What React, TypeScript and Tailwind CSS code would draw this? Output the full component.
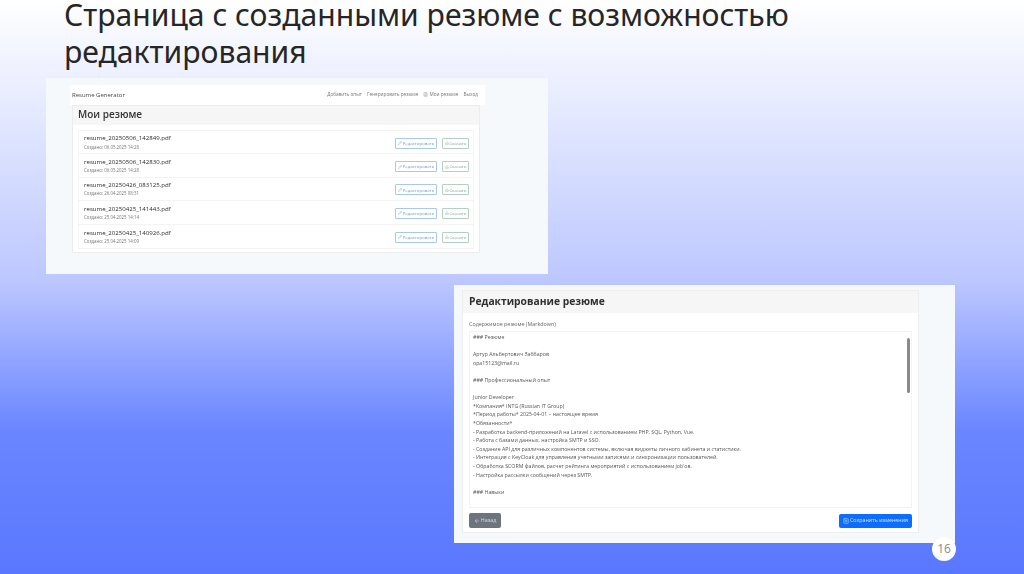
import { ArrowLeft, Download, FileText, Pencil, SquarePlus } from "lucide-react";

const items = [
  ["resume_20250506_142849.pdf", "Создано: 06.05.2025 14:28"],
  ["resume_20250506_142830.pdf", "Создано: 06.05.2025 14:28"],
  ["resume_20250426_083125.pdf", "Создано: 26.04.2025 08:31"],
  ["resume_20250425_141443.pdf", "Создано: 25.04.2025 14:14"],
  ["resume_20250425_140926.pdf", "Создано: 25.04.2025 14:09"],
];

const lines = [
  "### Резюме",
  "",
  "Артур Альбертович Заббаров",
  "opa15123@mail.ru",
  "",
  "### Профессиональный опыт",
  "",
  "Junior Developer",
  "*Компания* INTG (Russian IT Group)",
  "*Период работы* 2025-04-01 – настоящее время",
  "*Обязанности*",
  "- Разработка backend-приложений на Laravel с использованием PHP, SQL, Python, Vue.",
  "- Работа с базами данных, настройка SMTP и SSO.",
  "- Создание API для различных компонентов системы, включая виджеты личного кабинета и статистики.",
  "- Интеграция с KeyCloak для управления учетными записями и синхронизации пользователей.",
  "- Обработка SCORM файлов, расчет рейтинга мероприятий с использованием job'ов.",
  "- Настройка рассылки сообщений через SMTP.",
  "",
  "### Навыки",
];

function ResumeList() {
  return (
    <div className="ml-[46px] h-[196px] w-[502px] bg-[#f5f9fc] pl-6 pt-[7px] font-['Open_Sans',sans-serif]">
      <div className="blur-[0.3px]">
        <div className="flex h-5 w-[415px] items-center justify-between bg-white pl-[2px] pr-[7px] text-[#777]">
          <span className="text-[6px] text-[#444]">Resume Generator</span>
          <div className="flex items-center gap-[5px] text-[4.7px]">
            <span>Добавить опыт</span>
            <span>Генерировать резюме</span>
            <span className="flex items-center gap-[1px]"><FileText size={5} strokeWidth={1.5} />Мои резюме</span>
            <span>Выход</span>
          </div>
        </div>
        <div className="ml-[2px] h-[148px] w-[408px] border border-[#ececec] bg-white">
          <div className="flex h-[19px] items-center bg-[#f6f6f6] px-[5px] pb-[2px] text-[10px] font-semibold text-[#333]">Мои резюме</div>
          <div className="mx-[5px] mt-[5px] border border-[#f4f4f4]">
            {items.map(([name, date]) => (
              <div key={name} className="flex h-[23.4px] items-center justify-between border-b border-[#f3f3f3] pl-[5px] pr-[4px] last:border-b-0">
                <div className="leading-none">
                  <div className="text-[6.1px] font-medium text-[#2b2b2b]">{name}</div>
                  <div className="mt-[3px] text-[4.4px] text-[#777]">{date}</div>
                </div>
                <div className="mt-[2px] flex gap-[5px] text-[4.3px]">
                  <span className="flex h-[11px] w-[42px] items-center justify-center gap-[1px] rounded-[1px] border border-[#a9c8ee] text-[#6b9ad6]"><Pencil size={4} />Редактировать</span>
                  <span className="flex h-[11px] w-[27px] items-center justify-center gap-[1px] rounded-[1px] border border-[#b5d0c2] text-[#7fa58f]"><Download size={4} />Скачать</span>
                </div>
              </div>
            ))}
          </div>
        </div>
      </div>
    </div>
  );
}

function ResumeEdit() {
  return (
    <div className="ml-[454px] mt-[11px] h-[258px] w-[501px] bg-[#f5f9fc] pl-[8px] pt-[5px] font-['Open_Sans',sans-serif]">
      <div className="h-[243px] w-[457px] border border-[#eeeeee] bg-white blur-[0.3px]">
        <div className="flex h-[22px] items-center bg-[#f6f6f6] px-[6px] text-[10.3px] font-bold text-[#2f2f2f]">Редактирование резюме</div>
        <div className="px-[6px] pt-[5px]">
          <div className="text-[5.4px] leading-[12px] text-[#666]">Содержимое резюме (Markdown)</div>
          <div className="relative mt-[1px] h-[177px] border border-[#f3f3f3] px-[3px] pt-[1px] text-[5.25px] leading-[8.6px] text-[#555]">
            {lines.map((l, i) => (
              <div key={i} className="h-[8.6px] whitespace-nowrap">{l}</div>
            ))}
            <div className="absolute right-[1px] top-[6px] h-[55px] w-[3px] rounded-full bg-[#8a8a8a]" />
          </div>
          <div className="mt-[5px] flex items-center justify-between">
            <span className="flex h-[15px] w-[32px] items-center justify-center gap-[1px] rounded-[2px] bg-[#6c757d] text-[5.3px] text-[#d9dde0]"><ArrowLeft size={6} />Назад</span>
            <span className="flex h-[14px] w-[73px] items-center justify-center gap-[1px] rounded-[2px] bg-[#0d6efd] text-[5.3px] text-[#cfe2ff]"><SquarePlus size={6} />Сохранить изменения</span>
          </div>
        </div>
      </div>
    </div>
  );
}

export default function App() {
  return (
    <div className="relative h-[574px] w-[1024px] overflow-hidden bg-[linear-gradient(180deg,#ffffff_0%,#e6ebfe_18%,#bcc7ff_49%,#6a86ff_75%,#5a78ff_100%)]">
      <h1 className="ml-16 flex w-[800px] flex-col gap-[11px] whitespace-nowrap pt-[2px] font-['Noto_Sans',sans-serif] text-[30.1px] leading-[26px] text-[#262626]">
        <span>Страница с созданными резюме с возможностью</span>
        <span>редактирования</span>
      </h1>
      <div className="mt-[13px]">
        <ResumeList />
        <ResumeEdit />
      </div>
      <div className="absolute left-[932px] top-[537px] flex h-6 w-6 items-center justify-center rounded-full bg-white font-['Open_Sans',sans-serif] text-[12px] text-[#8a8a8a]">16</div>
    </div>
  );
}
